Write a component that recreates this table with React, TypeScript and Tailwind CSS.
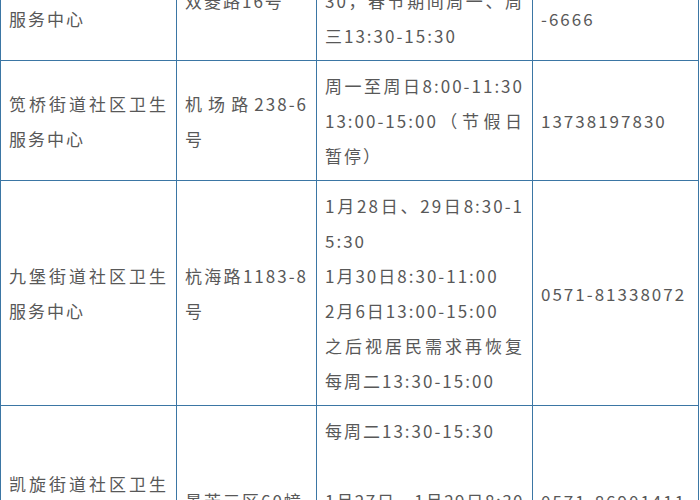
import React from "react";

const B = "border-[#3b76a4]";

function J({ children, className = "" }: { children: React.ReactNode; className?: string }) {
  return <div className={`text-justify [text-align-last:justify] whitespace-nowrap ${className}`}>{children}</div>;
}
function L({ children, className = "" }: { children?: React.ReactNode; className?: string }) {
  return <div className={`whitespace-nowrap ${className}`}>{children ?? "\u00a0"}</div>;
}
function Cell({ children }: { children: React.ReactNode }) {
  return (
    <div className={`flex flex-col justify-center border-r border-b ${B} px-2 py-[7px]`}>{children}</div>
  );
}

export default function App() {
  return (
    <div className="h-[500px] w-[700px] overflow-hidden bg-white">
      <div
        className={`mt-[-60px] grid grid-cols-[176px_140px_216px_166px] w-[699px] border-l border-t ${B} text-[17px] leading-[35px] tracking-[2px] text-[#585858]`}
        style={{ fontFamily: '"Noto Sans CJK SC", "Noto Sans", sans-serif' }}
      >
        {/* row 1 (partly scrolled off) */}
        <Cell>
          <J>彭埠街道社区卫生</J>
          <L>服务中心</L>
        </Cell>
        <Cell>
          <L>双菱路16号</L>
        </Cell>
        <Cell>
          <J>周一至周日8:00-11:</J>
          <J>30，春节期间周一、周</J>
          <L>三13:30-15:30</L>
        </Cell>
        <Cell>
          <L>0571-86047777</L>
          <L>-6666</L>
        </Cell>

        {/* row 2 */}
        <Cell>
          <J>笕桥街道社区卫生</J>
          <L>服务中心</L>
        </Cell>
        <Cell>
          <J>机场路238-6</J>
          <L>号</L>
        </Cell>
        <Cell>
          <J>周一至周日8:00-11:30</J>
          <J>13:00-15:00（节假日</J>
          <L>暂停）</L>
        </Cell>
        <Cell>
          <L>13738197830</L>
        </Cell>

        {/* row 3 */}
        <Cell>
          <J>九堡街道社区卫生</J>
          <L>服务中心</L>
        </Cell>
        <Cell>
          <J>杭海路1183-8</J>
          <L>号</L>
        </Cell>
        <Cell>
          <J>1月28日、29日8:30-1</J>
          <L>5:30</L>
          <L>1月30日8:30-11:00</L>
          <L>2月6日13:00-15:00</L>
          <J>之后视居民需求再恢复</J>
          <L>每周二13:30-15:00</L>
        </Cell>
        <Cell>
          <L>0571-81338072</L>
        </Cell>

        {/* row 4 */}
        <Cell>
          <J>凯旋街道社区卫生</J>
          <L>服务中心</L>
        </Cell>
        <Cell>
          <L>景芳三区60幢</L>
        </Cell>
        <Cell>
          <L>每周二13:30-15:30</L>
          <L />
          <J className="tracking-[1.5px]">1月27日、1月29日8:30</J>
          <L>-11:00</L>
          <L>之后视居民需求再恢复</L>
        </Cell>
        <Cell>
          <L>0571-86901411</L>
        </Cell>
      </div>
    </div>
  );
}
